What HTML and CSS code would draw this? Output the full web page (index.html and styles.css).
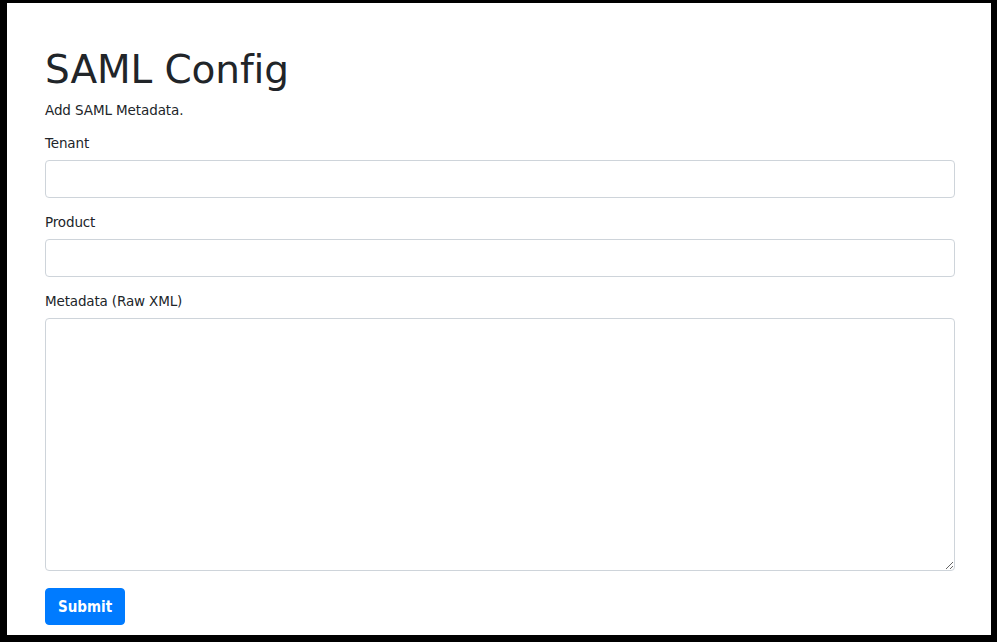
FILE: index.html
```html
<!DOCTYPE html>
<html lang="en">
<head>
<meta charset="utf-8">
<title>SAML Config</title>
<link rel="stylesheet" href="styles.css">
</head>
<body>
<div class="frame">
  <main class="page">
    <h1 class="title">SAML Config</h1>
    <p class="lead">Add SAML Metadata.</p>
    <form class="form">
      <div class="form-group">
        <label class="label" for="tenant">Tenant</label>
        <input class="control" id="tenant" type="text">
      </div>
      <div class="form-group">
        <label class="label" for="product">Product</label>
        <input class="control" id="product" type="text">
      </div>
      <div class="form-group">
        <label class="label" for="metadata">Metadata (Raw XML)</label>
        <textarea class="control textarea" id="metadata"></textarea>
      </div>
      <button class="btn" type="button">Submit</button>
    </form>
  </main>
</div>
</body>
</html>
```
FILE: styles.css
```css
* { box-sizing: border-box; }
html, body { margin: 0; padding: 0; height: 100%; }
body {
  background: #000;
  font-family: "DejaVu Sans", sans-serif;
  color: #212529;
}
.frame {
  height: 100%;
  padding: 3px 6px 7px 7px;
}
.page {
  background: #fff;
  height: 100%;
  padding: 43px 36px 0 38px;
  overflow: hidden;
}
.title {
  margin: 0 0 6px;
  font-size: 39px;
  font-weight: 400;
  line-height: 48px;
  letter-spacing: -0.1px;
}
.lead {
  margin: 0 0 12px;
  font-size: 13.5px;
  line-height: 21px;
  letter-spacing: -0.1px;
}
.form { margin: 0; }
.form-group { margin-bottom: 14px; }
.label {
  display: block;
  font-size: 13.5px;
  line-height: 21px;
  letter-spacing: -0.15px;
  margin-bottom: 6px;
}
.control {
  display: block;
  width: 100%;
  height: 38px;
  border: 1px solid #ced4da;
  border-radius: 4px;
  background: #fff;
  padding: 6px 12px;
  font: inherit;
  font-size: 16px;
  color: #495057;
}
.textarea {
  height: 253px;
  resize: vertical;
}
.form-group:last-of-type { margin-bottom: 17px; }
.btn {
  display: inline-block;
  height: 37px;
  padding: 1px 12px 0;
  border: 1px solid #007bff;
  border-radius: 4px;
  background: #007bff;
  color: #fff;
  font-family: "DejaVu Sans Condensed", "DejaVu Sans", sans-serif;
  font-weight: 700;
  font-size: 15px;
  line-height: 34px;
}
```
